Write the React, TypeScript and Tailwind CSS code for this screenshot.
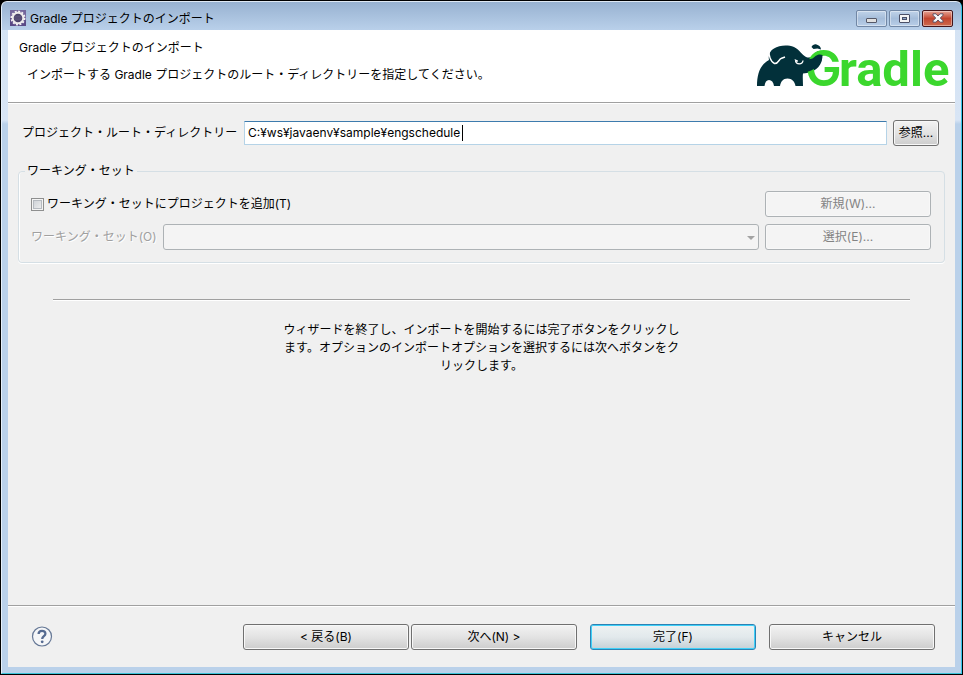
import type { ButtonHTMLAttributes } from "react";

function EclipseIcon() {
  return (
    <svg width="16" height="16" viewBox="0 0 16 16" className="shrink-0" aria-hidden="true">
      <rect width="16" height="16" fill="#5b4a86" />
      <rect width="16" height="8" fill="#74669b" />
      <circle cx="8" cy="8" r="6.600" fill="none" stroke="#f4f2f4" strokeWidth="1.800" strokeDasharray="2 1.450" />
      <circle cx="8" cy="8" r="5.300" fill="#4a4068" stroke="#eeebeb" strokeWidth="2" />
      <path d="M4.6 6.2h6.8M4 8h8M4.6 9.8h6.8" stroke="#6d648c" strokeWidth="0.7" />
    </svg>
  );
}

function GradleLogo() {
  return (
    <svg width="196" height="62" viewBox="0 -4 196 62" className="shrink-0" role="img" aria-label="Gradle">
      <path
        d="M1 43C1 31 4 22 13 17C12 12 14 7.500 18 5.500C23 2.500 31 1.500 38 4C44 7 46 12 50 14C54 15.500 57 14 59 10L62 8L66 9V16C65 24 58 30 47 30.500C46.500 34 47 39 47 43H39.500C39 39 36 35.500 31.500 35.500C27 35.500 24.500 39 24 43H18C17.500 39 15.500 37 13 37C10.500 37 9 39 8.500 43Z"
        fill="#02303a"
      />
      <text y="43" fontSize="49" className="fill-[#3bd72d] font-['Roboto',sans-serif] font-bold">
        <tspan x="49" className="font-['Inter',sans-serif] font-semibold">
          G
        </tspan>
        <tspan x="83">radle</tspan>
      </text>
      <path
        d="M46 14.500C52 18 57 16 59.500 13C61.500 11.500 64 11 66.500 12C67 20 60 28 46 30Z"
        fill="#02303a"
      />
      <path d="M55.500 4C56.500 2 58.500 1 60.500 1.500C63 2 65 4 65 6.500L61.500 5.500L57.500 6Z" fill="#02303a" />
      <path d="M13 6.500C12.500 12 14.500 19 18.500 20.500C22.500 21 23 16 25 15.500L29 14" fill="none" stroke="#fff" strokeWidth="1.4" />
      <path d="M39.500 17.500C40 22 46.500 22 47 17.500" fill="none" stroke="#fff" strokeWidth="1.3" />
      <path d="M38.500 16L42 17.500L41.500 19L39.500 18.500Z" fill="#fff" />
    </svg>
  );
}

function CaptionButton({ kind, label }: { kind: "min" | "max" | "close"; label: string }) {
  const look =
    kind === "close"
      ? "border-[#43141a] bg-linear-to-b from-[#e6a395] via-[#c2452f] via-50% to-[#ce6a4e]"
      : "border-[#7187a5] bg-linear-to-b from-[#c0d3e9] via-[#a5bdda] via-50% to-[#b8cee8]";
  return (
    <button
      type="button"
      aria-label={label}
      className={`flex h-[17px] w-[31px] items-center justify-center rounded-[2px] border shadow-[inset_0_0_0_1px_rgba(255,255,255,0.4)] ${look}`}
    >
      <svg width="12" height="10" viewBox="0 0 12 10" aria-hidden="true">
        {kind === "min" && <rect x="0.500" y="5.500" width="10" height="4" rx="0.500" fill="#e0e0e0" stroke="#555868" />}
        {kind === "max" && (
          <g fill="#f4f4f4" stroke="#4b5067">
            <rect x="0.500" y="1.500" width="10" height="8" rx="0.500" />
            <rect x="3.500" y="4.500" width="4" height="2" fill="#8ea7c8" />
          </g>
        )}
        {kind === "close" && (
          <path
            d="M1 .8h3L6 3 8 .8h3v1.400L8.300 5 11 7.800v1.400H8L6 7 4 9.200H1V7.800L3.700 5 1 2.200Z"
            fill="#f6f6f8"
            stroke="#52495f"
            strokeWidth="0.9"
          />
        )}
      </svg>
    </button>
  );
}

function PushButton({ primary, className = "", ...rest }: ButtonHTMLAttributes<HTMLButtonElement> & { primary?: boolean }) {
  const look = primary
    ? "border-[#2c82b4] bg-linear-to-b from-[#eef2f3] from-0% via-[#e2e9ec] via-50% to-[#c5d0d6] shadow-[inset_0_0_0_1px_#3fd0f8]"
    : "border-[#707070] bg-linear-to-b from-[#f3f3f3] via-[#e3e3e3] via-50% to-[#cdcdcd] shadow-[inset_0_0_0_1px_#f8f8f8]";
  const disabled = "disabled:border-[#adb2b5] disabled:bg-[#f4f4f4] disabled:bg-none disabled:text-[#838383]";
  return (
    <button
      type="button"
      className={`h-[26px] shrink-0 rounded-[3px] border text-center leading-4 whitespace-nowrap ${look} ${disabled} ${className}`}
      {...rest}
    />
  );
}

function Rule({ className = "" }: { className?: string }) {
  return <div className={`h-[2px] border-t border-[#a0a0a0] bg-white ${className}`} />;
}

export default function App() {
  return (
    <div className="flex min-h-screen flex-col bg-black p-px font-['Inter','Noto_Sans_CJK_JP',sans-serif] text-[12px] leading-4 text-black">
      <div className="flex grow flex-col rounded-t-[6px] border border-t-[#dfe9f4] border-r-[#35c6ea] border-b-[#3cc3d8] border-l-[#e6f0fa] bg-linear-to-b from-[#d3e2f3] from-0% via-[#d8e5f5] via-[118px] to-[#bad1ea] to-[122px]">
        <header className="flex h-7 shrink-0 items-center rounded-t-[5px] bg-linear-to-b from-[#98b2d1] to-[#b9d0ea] px-2 pt-1">
          <EclipseIcon />
          <h1 className="ml-1 grow pt-0.5">Gradle プロジェクトのインポート</h1>
          <div className="flex gap-[2px]">
            <CaptionButton kind="min" label="最小化" />
            <CaptionButton kind="max" label="最大化" />
            <CaptionButton kind="close" label="閉じる" />
          </div>
        </header>

        <div className="mx-[6px] mb-[6px] flex grow flex-col bg-[#f0f0f0]">
          <div className="flex h-[72px] justify-between bg-white pr-[3px] pl-[11px]">
            <div className="pt-[10px]">
              <h2>Gradle プロジェクトのインポート</h2>
              <p className="mt-[11px] ml-2">インポートする Gradle プロジェクトのルート・ディレクトリーを指定してください。</p>
            </div>
            <div className="pt-[9px]">
              <GradleLogo />
            </div>
          </div>
          <Rule />

          <main className="grow px-[10px]">
            <div className="mt-4 flex items-center pr-[6px] pl-1">
              <label htmlFor="root-dir" className="w-[222px] shrink-0 whitespace-nowrap">
                プロジェクト・ルート・ディレクトリー
              </label>
              <div className="relative mr-[6px] flex grow">
                <input
                  id="root-dir"
                  type="text"
                  defaultValue="C:¥ws¥javaenv¥sample¥engschedule"
                  className="h-6 w-full rounded-[1px] border border-[#b5d3e7] border-t-[#3d7bad] bg-white px-[3px] pb-0.5 outline-none"
                />
                <span className="absolute top-1 left-[218px] h-4 w-px bg-black" />
              </div>
              <PushButton className="w-[46px]">参照...</PushButton>
            </div>

            <fieldset className="mt-[17px] rounded-[4px] border border-[#d5dfe5] pr-[13px] pb-3 pl-3 shadow-[0_1px_0_#fff,inset_1px_0_0_#fff]">
              <legend className="-ml-[6px] px-[2px]">ワーキング・セット</legend>
              <div className="mt-3 flex items-center justify-between">
                <label className="flex items-center gap-[3px]">
                  <input
                    type="checkbox"
                    className="size-[13px] appearance-none border border-[#8e8f8f] bg-linear-to-br from-[#c8cdd3] to-[#f3f3f3] shadow-[inset_0_0_0_1px_#f4f4f4,inset_0_0_0_2px_#b5bac0]"
                  />
                  ワーキング・セットにプロジェクトを追加(T)
                </label>
                <PushButton disabled className="w-[166px]">新規(W)...</PushButton>
              </div>
              <div className="mt-[7px] flex items-center">
                <label htmlFor="working-set" className="w-[132px] shrink-0 whitespace-nowrap text-[#a0a0a0] [text-shadow:1px_1px_0_#fff]">
                  ワーキング・セット(O)
                </label>
                <div className="relative mr-[6px] flex grow">
                  <select
                    id="working-set"
                    disabled
                    className="h-[26px] w-full appearance-none rounded-[3px] border border-[#adb2b5] bg-[#f4f4f4] px-2 opacity-100"
                  />
                  <svg width="8" height="4" viewBox="0 0 8 4" className="pointer-events-none absolute top-3 right-1" aria-hidden="true">
                    <path d="M0 0h8L4 4Z" fill="#a3a3a3" />
                  </svg>
                </div>
                <PushButton disabled className="w-[166px]">選択(E)...</PushButton>
              </div>
            </fieldset>

            <Rule className="mt-9 mr-[35px] ml-[35px]" />
            <p className="mx-auto mt-5 w-[400px] text-center leading-[18px]">
              ウィザードを終了し、インポートを開始するには完了ボタンをクリックします。オプションのインポートオプションを選択するには次へボタンをクリックします。
            </p>
          </main>

          <Rule />
          <footer className="flex h-[60px] items-center justify-between pr-5 pl-[23px]">
            <button type="button" aria-label="ヘルプ" className="size-[22px]">
              <svg width="22" height="22" viewBox="0 0 22 22" aria-hidden="true">
                <circle cx="11" cy="10.500" r="9.500" fill="#f5f6f8" stroke="#667896" strokeWidth="1.200" />
                <path d="M7.600 8.100C7.600 3.800 14.400 3.800 14.400 7.700C14.400 10.100 11.200 10.100 11.200 12.900" fill="none" stroke="#566b91" strokeWidth="2.300" />
                <circle cx="11.200" cy="15.800" r="1.400" fill="#566b91" />
              </svg>
            </button>
            <div className="flex gap-[13px]">
              <div className="flex gap-[2px]">
                <PushButton className="w-[166px]">&lt; 戻る(B)</PushButton>
                <PushButton className="w-[166px]">次へ(N) &gt;</PushButton>
              </div>
              <PushButton primary className="w-[166px]">完了(F)</PushButton>
              <PushButton className="w-[166px]">キャンセル</PushButton>
            </div>
          </footer>
        </div>
      </div>
    </div>
  );
}
